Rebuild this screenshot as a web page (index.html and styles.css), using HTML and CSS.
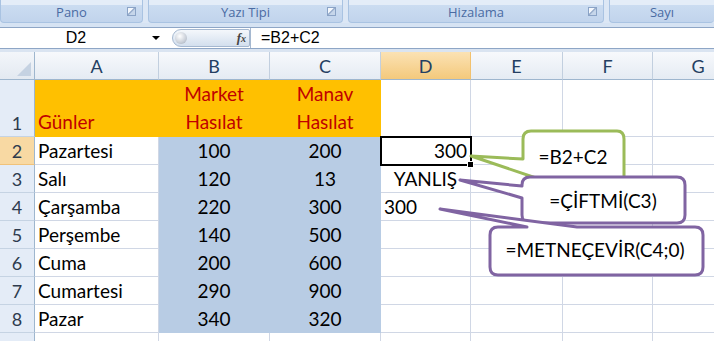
FILE: index.html
```html
<!DOCTYPE html>
<html lang="tr">
<head>
    <meta charset="UTF-8">
    <title>Excel - Formüller</title>
    <link rel="stylesheet" href="styles.css">
</head>
<body>
    <div class="ribbon">
        <div class="group pano"><span class="group-label">Pano</span><span class="launcher"></span></div>
        <div class="group font"><span class="group-label">Yazı Tipi</span><span class="launcher"></span></div>
        <div class="group align"><span class="group-label">Hizalama</span><span class="launcher"></span></div>
        <div class="group number"><span class="group-label">Sayı</span></div>
    </div>
    <div class="ribbon-foot"></div>

    <div class="formula-bar">
        <div class="name-box">
            <span class="name">D2</span>
            <span class="drop"></span>
        </div>
        <div class="fx-pill">
            <span class="knob"></span>
            <span class="fx">f<i>x</i></span>
        </div>
        <div class="formula">=B2+C2</div>
    </div>
    <div class="bar-gap"></div>

    <div class="sheet">
        <!-- column headers -->
        <div class="corner"></div>
        <div class="col-head">A</div>
        <div class="col-head">B</div>
        <div class="col-head">C</div>
        <div class="col-head active">D</div>
        <div class="col-head">E</div>
        <div class="col-head">F</div>
        <div class="col-head">G</div>

        <!-- row 1 -->
        <div class="row-head">1</div>
        <div class="cell orange red">Günler</div>
        <div class="cell orange red center">Market<br>Hasılat</div>
        <div class="cell orange red center">Manav<br>Hasılat</div>
        <div class="cell"></div>
        <div class="cell"></div>
        <div class="cell"></div>
        <div class="cell"></div>

        <!-- row 2 -->
        <div class="row-head active">2</div>
        <div class="cell">Pazartesi</div>
        <div class="cell blue center">100</div>
        <div class="cell blue center">200</div>
        <div class="cell right selected">300</div>
        <div class="cell"></div>
        <div class="cell"></div>
        <div class="cell"></div>

        <!-- row 3 -->
        <div class="row-head">3</div>
        <div class="cell">Salı</div>
        <div class="cell blue center">120</div>
        <div class="cell blue center">13</div>
        <div class="cell center">YANLIŞ</div>
        <div class="cell"></div>
        <div class="cell"></div>
        <div class="cell"></div>

        <!-- row 4 -->
        <div class="row-head">4</div>
        <div class="cell">Çarşamba</div>
        <div class="cell blue center">220</div>
        <div class="cell blue center">300</div>
        <div class="cell">300</div>
        <div class="cell"></div>
        <div class="cell"></div>
        <div class="cell"></div>

        <!-- row 5 -->
        <div class="row-head">5</div>
        <div class="cell">Perşembe</div>
        <div class="cell blue center">140</div>
        <div class="cell blue center">500</div>
        <div class="cell"></div>
        <div class="cell"></div>
        <div class="cell"></div>
        <div class="cell"></div>

        <!-- row 6 -->
        <div class="row-head">6</div>
        <div class="cell">Cuma</div>
        <div class="cell blue center">200</div>
        <div class="cell blue center">600</div>
        <div class="cell"></div>
        <div class="cell"></div>
        <div class="cell"></div>
        <div class="cell"></div>

        <!-- row 7 -->
        <div class="row-head">7</div>
        <div class="cell">Cumartesi</div>
        <div class="cell blue center">290</div>
        <div class="cell blue center">900</div>
        <div class="cell"></div>
        <div class="cell"></div>
        <div class="cell"></div>
        <div class="cell"></div>

        <!-- row 8 -->
        <div class="row-head">8</div>
        <div class="cell">Pazar</div>
        <div class="cell blue center">340</div>
        <div class="cell blue center">320</div>
        <div class="cell"></div>
        <div class="cell"></div>
        <div class="cell"></div>
        <div class="cell"></div>

        <!-- row 9, only its top edge shows -->
        <div class="row-head"></div>
        <div class="cell"></div>
        <div class="cell"></div>
        <div class="cell"></div>
        <div class="cell"></div>
        <div class="cell"></div>
        <div class="cell"></div>
        <div class="cell"></div>
    </div>

    <!-- callout shapes drawn over the sheet -->
    <svg class="callouts" width="714" height="341" viewBox="0 0 714 341">
        <path class="green" d="M531 131 H617 Q624 131 624 139 V176 Q624 183 617 183 H551 L471 156 L523 159 V139 Q523 131 531 131 Z"/>
        <text x="573" y="164">=B2+C2</text>

        <path class="purple" d="M530 177 H677 Q685 177 685 185 V215 Q685 223 677 223 H530 Q522 223 522 215 V198 L460 180 L522 186 V185 Q522 177 530 177 Z"/>
        <text x="603" y="208">=ÇİFTMİ(C3)</text>

        <path class="purple" d="M498 227 H527 L440 209 L577 227 H695 Q703 227 703 235 V267 Q703 275 695 275 H498 Q490 275 490 267 V235 Q490 227 498 227 Z"/>
        <text x="595" y="257">=METNEÇEVİR(C4;0)</text>
    </svg>
</body>
</html>
```

FILE: styles.css
```css
body {
    margin: 0;
    width: 714px;
    height: 341px;
    overflow: hidden;
    position: relative;
    background: #fff;
    font-family: Lato, "Liberation Sans", sans-serif;
}

/* ribbon group captions */
.ribbon {
    height: 23px;
    display: flex;
    gap: 5px;
    background: #dce7f5;
}

.group {
    position: relative;
    box-sizing: border-box;
    display: flex;
    justify-content: center;
    align-items: flex-end;
    background: linear-gradient(#e4edf8 0, #e4edf8 5px, #cbdcf1 5px, #c1d4ec 100%);
    border: 1px solid #a9c3e2;
    border-top: none;
    border-radius: 0 0 4px 4px;
    font-family: "Open Sans", "Noto Sans", sans-serif;
    font-size: 13px;
    color: #4a6ba3;
}

.group-label {
    line-height: 18px;
    padding-bottom: 1px;
}

.pano { width: 143px; }
.font { width: 195px; }
.align { width: 256px; }
.number { flex: 1; border-right: none; }

.launcher {
    position: absolute;
    right: 6px;
    bottom: 6px;
    width: 7px;
    height: 7px;
    border: 1px solid #8aa3c6;
    background: linear-gradient(135deg, #f3f7fc 40%, #7f98bd 45%, #c6d6ea 60%);
}

.ribbon-foot {
    height: 4px;
    background: #d6e3f3;
}

/* formula bar */
.formula-bar {
    height: 22px;
    box-sizing: border-box;
    display: flex;
    align-items: center;
    background: #fff;
    border-top: 1px solid #8ea6c6;
    border-bottom: 1px solid #8ea6c6;
    font-family: "Liberation Sans", Arial, sans-serif;
    font-size: 16px;
}

.name-box {
    width: 172px;
    display: flex;
    align-items: center;
}

.name {
    width: 152px;
    text-align: center;
}

.drop {
    width: 0;
    height: 0;
    border-left: 4px solid transparent;
    border-right: 4px solid transparent;
    border-top: 4px solid #000;
}

.fx-pill {
    width: 78px;
    height: 18px;
    box-sizing: border-box;
    display: flex;
    align-items: center;
    justify-content: space-between;
    padding: 0 3px 0 2px;
    border: 1px solid #a5b8d0;
    border-radius: 9px 2px 2px 9px;
    background: linear-gradient(#f4f7fb, #d3dfee);
}

.knob {
    width: 12px;
    height: 12px;
    border-radius: 50%;
    background: radial-gradient(circle at 40% 35%, #ffffff, #c9cfd8 60%, #9aa4b2);
}

.fx {
    font-family: "Liberation Serif", serif;
    font-style: italic;
    font-weight: bold;
    font-size: 13px;
    color: #444;
}

.fx i {
    font-size: 10px;
}

.formula {
    flex: 1;
    height: 100%;
    padding-left: 10px;
    border-left: 1px solid #a5b8d0;
    line-height: 20px;
}

.bar-gap {
    height: 3px;
    background: #dae4f1;
}

/* worksheet grid */
.sheet {
    display: grid;
    grid-template-columns: 35px 124px 111px 111px 90px 92px 90px 91px;
    grid-template-rows: 28px 57px repeat(8, 28px);
    width: 714px;
    overflow: hidden;
    font-size: 19px;
}

.sheet > div {
    box-sizing: border-box;
    border-right: 1px solid #d0d7e5;
    border-bottom: 1px solid #d0d7e5;
}

.corner {
    position: relative;
    background: linear-gradient(#f3f6fa, #e3e9f1);
    border-right-color: #9eb6ce !important;
    border-bottom-color: #9eb6ce !important;
}

.corner::after {
    content: "";
    position: absolute;
    right: 3px;
    bottom: 3px;
    border-left: 14px solid transparent;
    border-bottom: 14px solid #c5d2e2;
}

.col-head {
    display: flex;
    align-items: center;
    justify-content: center;
    background: linear-gradient(#f7f9fc, #e5ebf3);
    border-right-color: #c2cfdf !important;
    border-bottom-color: #9eb6ce !important;
    color: #243f62;
    font-size: 18px;
}

.col-head.active {
    background: linear-gradient(#fbe2b4, #f4c97c);
    border-right-color: #f2c16e !important;
}

.row-head {
    display: flex;
    align-items: flex-end;
    justify-content: center;
    line-height: 26px;
    background: #e4ecf7;
    border-right-color: #9eb6ce !important;
    border-bottom-color: #c5d3e3 !important;
    color: #2e3b4e;
    font-size: 18px;
}

.row-head.active {
    background: #f8d9a3;
    border-bottom-color: #f0c27a !important;
}

.cell {
    display: flex;
    flex-direction: column;
    justify-content: flex-end;
    padding: 0 3px;
    line-height: 26px;
    color: #000;
    white-space: nowrap;
}

.cell.center { text-align: center; }
.cell.right { text-align: right; }

.cell.orange {
    background: #ffc000;
    border-color: #ffc000;
    line-height: 28px;
}

.cell.red { color: #c00000; }

.cell.blue {
    background: #b8cce4;
    border-color: #b8cce4;
}

.cell.selected {
    position: relative;
    outline: 2px solid #000;
    outline-offset: -1px;
}

.cell.selected::after {
    content: "";
    position: absolute;
    right: -4px;
    bottom: -4px;
    width: 5px;
    height: 5px;
    background: #000;
    border: 1px solid #fff;
}

/* callouts */
.callouts {
    position: absolute;
    top: 0;
    left: 0;
}

.callouts path {
    fill: #fff;
    stroke-width: 3;
    stroke-linejoin: round;
}

.callouts .green { stroke: #9bbb59; }
.callouts .purple { stroke: #8064a2; }

.callouts text {
    font-family: Lato, "Liberation Sans", sans-serif;
    font-size: 19px;
    text-anchor: middle;
    fill: #000;
}
```
